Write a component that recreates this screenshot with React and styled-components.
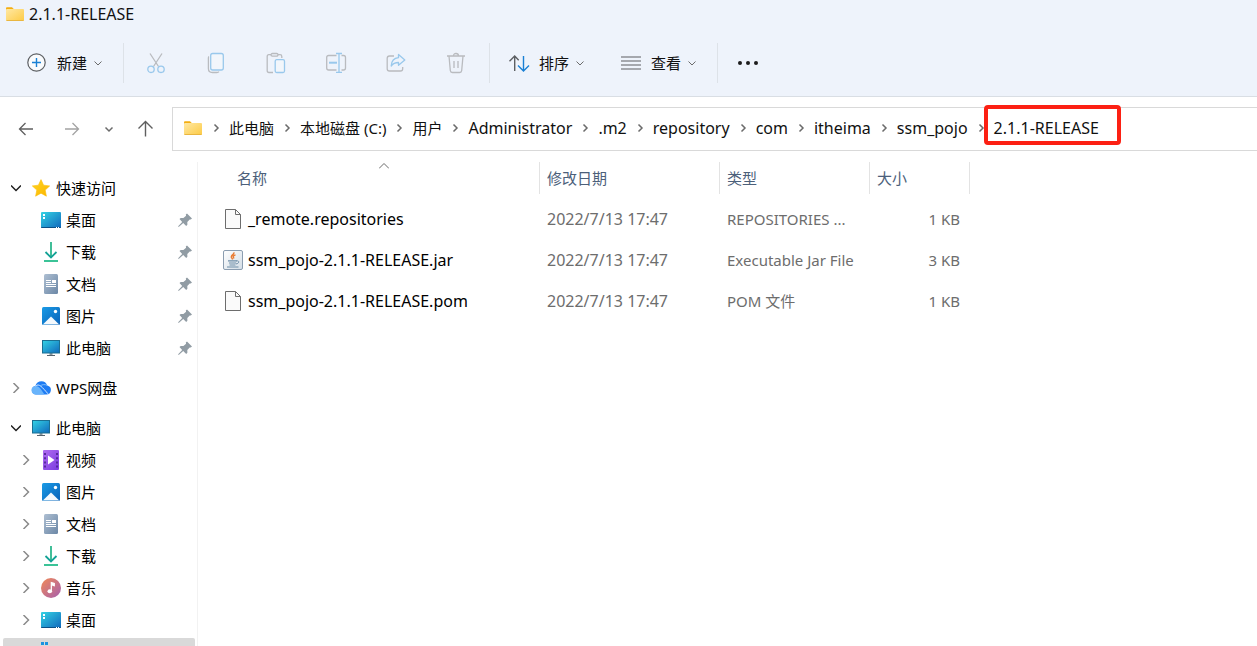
import React from 'react'

import styled, {createGlobalStyle, css} from 'styled-components'

const FONT = '"Noto Sans", "Noto Sans CJK SC", sans-serif'

const places = [
  [
    {icon: 'star', label: '快速访问', open: true, root: true},
    {icon: 'desktop', label: '桌面', pinned: true},
    {icon: 'download', label: '下载', pinned: true},
    {icon: 'document', label: '文档', pinned: true},
    {icon: 'picture', label: '图片', pinned: true},
    {icon: 'computer', label: '此电脑', pinned: true},
  ],
  [{icon: 'cloud', label: 'WPS网盘', root: true}],
  [
    {icon: 'computer', label: '此电脑', open: true, root: true},
    {icon: 'video', label: '视频'},
    {icon: 'picture', label: '图片'},
    {icon: 'document', label: '文档'},
    {icon: 'download', label: '下载'},
    {icon: 'music', label: '音乐'},
    {icon: 'desktop', label: '桌面'},
    {icon: 'drive', selected: true},
  ],
]

const crumbs = [
  {label: '此电脑'},
  {label: '本地磁盘 (C:)'},
  {label: '用户'},
  {label: 'Administrator', latin: true},
  {label: '.m2', latin: true},
  {label: 'repository', latin: true},
  {label: 'com', latin: true},
  {label: 'itheima', latin: true},
  {label: 'ssm_pojo', latin: true},
  {label: '2.1.1-RELEASE', latin: true, marked: true},
]

const files = [
  {
    icon: 'file',
    name: '_remote.repositories',
    date: '2022/7/13 17:47',
    type: 'REPOSITORIES ...',
    size: '1 KB',
  },
  {
    icon: 'jar',
    name: 'ssm_pojo-2.1.1-RELEASE.jar',
    date: '2022/7/13 17:47',
    type: 'Executable Jar File',
    size: '3 KB',
  },
  {
    icon: 'file',
    name: 'ssm_pojo-2.1.1-RELEASE.pom',
    date: '2022/7/13 17:47',
    type: 'POM 文件',
    size: '1 KB',
  },
]

const GlobalStyle = createGlobalStyle`
  * {
    box-sizing: border-box;
  }
  body {
    margin: 0;
    background: #fff;
    color: #111;
    font: 15px/20px ${FONT};
  }
  button {
    padding: 0;
    border: 0;
    background: none;
    color: inherit;
    font: inherit;
  }
  a {
    color: inherit;
    text-decoration: none;
  }
`

const turns = {right: 0, down: 90, up: -90}

const Defs = styled.svg`
  position: absolute;
  width: 0;
  height: 0;
`
const Drawing = styled.svg`
  display: block;
  flex: none;
  width: 20px;
  height: 20px;
  overflow: visible;
`
const Arrow = styled.svg`
  display: block;
  flex: none;
  width: 10px;
  height: 10px;
  transform: rotate(${p => turns[p.$turn]}deg);
`
const Window = styled.div`
  display: flex;
  flex-direction: column;
  height: 100vh;
  overflow: hidden;
`
const TitleBar = styled.header`
  display: flex;
  align-items: center;
  gap: 4px;
  flex: none;
  height: 30px;
  padding: 0 5px 2px;
  background: #eef3fb;
`
const Title = styled.h1`
  margin: 0;
  font-size: 16px;
  font-weight: 400;
`
const CommandBar = styled.div`
  display: flex;
  align-items: center;
  flex: none;
  height: 67px;
  padding-left: 17px;
  border-bottom: 1px solid #d9dee4;
  background: #eef3fb;
`
const MenuButton = styled.button`
  display: flex;
  align-items: center;
  height: 40px;
  padding: 0 10px;
`
const MenuLabel = styled.span`
  margin: 0 6px 0 10px;
`
const Divider = styled.div`
  width: 1px;
  height: 40px;
  margin: 0 9px 0 10px;
  background: #dde2e8;
`
const Actions = styled.div`
  display: flex;
  gap: 20px;
  padding: 0 3px;
`
const Menus = styled.div`
  display: flex;
  gap: 16px;
`
const IconButton = styled.button`
  display: flex;
  align-items: center;
  justify-content: center;
  width: 40px;
  height: 40px;
`
const AddressRow = styled.div`
  display: flex;
  align-items: center;
  flex: none;
  padding: 10px 0 0 3px;
`
const NavButton = styled.button`
  display: flex;
  align-items: center;
  justify-content: center;
  width: ${p => (p.$narrow ? 28 : 46)}px;
  height: 40px;
`
const Path = styled.nav`
  display: flex;
  align-items: center;
  flex: 1;
  height: 44px;
  margin-left: 3px;
  padding: 0 0 2px 10px;
  border: 1px solid #d9d9d9;
  border-right: 0;
  white-space: nowrap;
`
const CrumbGap = styled.span`
  display: flex;
  justify-content: center;
  width: 26px;
`
const Crumb = styled.a`
  position: relative;
  font-size: ${p => (p.$latin ? 16 : 15)}px;
  ${p =>
    p.$marked &&
    css`
      &::after {
        content: '';
        position: absolute;
        inset: -13px -22px -7px -10px;
        border: 4px solid #fc2013;
        border-radius: 4px;
      }
    `}
`
const Body = styled.div`
  display: flex;
  flex: 1;
  min-height: 0;
  padding-top: 11px;
`
const Sidebar = styled.nav`
  display: flex;
  flex-direction: column;
  gap: 12px;
  flex: none;
  width: 198px;
  padding: 12px 2px 0 3px;
  border-right: 1px solid #f2f2f2;
  overflow: hidden;
`
const Group = styled.div`
  display: flex;
  flex-direction: column;
  gap: 4px;
`
const PlaceLink = styled.a`
  display: flex;
  align-items: center;
  gap: 5px;
  height: 28px;
  padding-left: ${p => (p.$root ? 3 : 13)}px;
  border-radius: 2px;
  background: ${p => (p.$selected ? '#d9d9d9' : 'none')};
  color: #000;
`
const Toggle = styled.span`
  display: flex;
  justify-content: center;
  width: 20px;
`
const PlaceLabel = styled.span`
  flex: 1;
`
const Main = styled.main`
  flex: 1;
  min-width: 0;
  padding-left: 17px;
`
const Table = styled.table`
  width: 755px;
  table-layout: fixed;
  border-collapse: collapse;
`
const Col = styled.col`
  width: ${p => p.$width}px;
`
const Th = styled.th`
  padding: 0 0 4px;
  font-weight: 400;
`
const SortButton = styled.button`
  display: block;
  position: relative;
  width: 100%;
  height: 32px;
  padding-left: ${p => (p.$first ? 22 : 7)}px;
  border-right: 1px solid #e3e3e3;
  color: #4c607a;
  text-align: left;
`
const Caret = styled.span`
  position: absolute;
  top: -1px;
  left: 164px;
`
const Td = styled.td`
  height: 41px;
  padding: 0 10px 0 7px;
  color: #6d6d6d;
  font-size: ${p => (p.$large ? 16 : 15)}px;
  text-align: ${p => (p.$end ? 'right' : 'left')};
  white-space: nowrap;
`
const FileName = styled.span`
  display: flex;
  align-items: center;
  gap: 5px;
  padding-left: 1px;
  color: #000;
`

const grey = {stroke: '#b9bbbf', strokeWidth: 1.3}
const blue = {stroke: '#99c8ec', strokeWidth: 1.3}

const drawings = {
  folder: (
    <>
      <path d="M1 4.2q0-1 1-1h5l2 2v4H1z" fill="#f4ae12" />
      <rect x="1" y="5" width="18" height="12" rx="1" fill="url(#folder)" />
      <path d="M1.5 16.5h17" stroke="#e9b640" strokeWidth="1" />
    </>
  ),
  star: (
    <path
      d="M10 1.6l2.6 5.6 6.1.7-4.5 4.2 1.2 6.1-5.4-3-5.4 3 1.2-6.1-4.5-4.2 6.1-.7z"
      fill="url(#star)"
      stroke="#fbbd0a"
      strokeWidth=".6"
      strokeLinejoin="round"
    />
  ),
  desktop: (
    <>
      <rect y="2" width="20" height="16" rx="1" fill="url(#screen)" />
      <path d="M2 4h2v2H2zM2 7h2v2H2z" fill="#fff" />
      <path d="M0 17h20q0 1-1 1H1q-1 0-1-1z" fill="#0a4f86" />
      <path d="M15 17h1v1h-1zM17 17h1v1h-1z" fill="#fff" />
    </>
  ),
  download: (
    <g fill="none" stroke="#1fb090" strokeWidth="1.8">
      <path d="M10 0v15.5" stroke="#2cb78d" />
      <path d="M4.500 10L10 15.500l5.500-5.500" stroke="#14a296" />
      <path d="M3 19h14" stroke="#25bd8c" />
    </g>
  ),
  document: (
    <>
      <rect x="3" width="14" height="20" rx="1.5" fill="url(#slate)" />
      <path d="M5 6.5h5M5 8.500h5M5 10.500h10M5 12.500h10" stroke="#fff" />
      <path d="M11 6h4v3h-4z" fill="#fff" />
    </>
  ),
  picture: (
    <>
      <rect x="1" y="1" width="18" height="18" rx="1.5" fill="url(#photo)" />
      <path d="M1.8 18.500L10 10.400l8.200 8.100z" fill="#f4f9fd" />
      <circle cx="14.5" cy="5.500" r="1.700" fill="#fff" />
    </>
  ),
  computer: (
    <>
      <path d="M8.500 15h3v2h-3z" fill="#8b979f" />
      <path d="M6 17h8v1H6z" fill="#56636c" />
      <rect x="1.500" y="2.500" width="17" height="12.500" fill="url(#screen)" stroke="#1b6f91" />
    </>
  ),
  cloud: (
    <>
      <path
        d="M5 16.500a4.300 4.300 0 0 1-.6-8.500C5 5 7.500 3.200 10.500 3.200c2.700 0 4.900 1.600 5.700 4.200a4.600 4.600 0 0 1-1.200 9.100z"
        fill="#1f7cf3"
      />
      <path d="M1 14.500a4.300 4.300 0 0 1 4-6.600c3.500.1 5.200 3.600 8.500 8.600H5c-2 0-3.300-.8-4-2z" fill="#69b4fb" />
      <path d="M4.600 8C8 5 11 9 17 15.800" stroke="#d3e9ff" fill="none" />
      <path d="M9 8c2-1.500 5-2 7.500-.5" stroke="#82c0ff" fill="none" />
    </>
  ),
  video: (
    <>
      <rect x="2" width="16" height="20" rx="1" fill="url(#violet)" />
      <path d="M4 3v15M16 3v15" stroke="#48208c" strokeWidth="1.600" strokeDasharray="2 2.200" />
      <path d="M7 5.500l6.500 4.500L7 14.500z" fill="#fff" />
    </>
  ),
  music: (
    <>
      <circle cx="10" cy="10" r="10" fill="url(#tune)" />
      <ellipse cx="8.800" cy="13.200" rx="2.300" ry="2" fill="#fff" />
      <path d="M10.300 13.200V4.500l3 1v2.200l-2-.6" fill="#fff" stroke="#fff" strokeWidth="1.200" />
    </>
  ),
  drive: (
    <>
      <path d="M0 0h3v3H0zM4 0h3v3H4zM0 4h3v3H0zM4 4h3v3H4z" fill="#1b93e0" />
      <rect y="9" width="20" height="7" rx="1" fill="#8d969c" />
    </>
  ),
  file: (
    <g fill="#fafafa" stroke="#6d6d6d">
      <path d="M2.500.500h10l5 5v14h-15z" />
      <path d="M12.500.500v5h5" fill="none" />
    </g>
  ),
  jar: (
    <>
      <rect x=".5" y=".5" width="19" height="19" rx="1.500" fill="url(#paper)" stroke="#8b9db0" />
      <path
        d="M10.700 2.300c1.300 2-3.600 3.200-2.200 5.300.5.700.9 1 1.100 1.900M12.500 4.800c-2.300.8-2.800 1.600-1.500 3.700"
        fill="none"
        stroke="#e8792f"
        strokeWidth="1.400"
      />
      <path d="M5 10.900h9M6 13h7M6.500 15h6M4 17h11.500" stroke="#6f8ea8" strokeWidth="1.200" />
      <path d="M13.500 10.900c3.500-.6 2.500 3-.5 3" fill="none" stroke="#6f8ea8" />
    </>
  ),
  pin: (
    <path
      d="M12 3.500l5 5-1.300 1.100-1-.2-2.400 2.700.1 2.700-1.200 1.200-3-3-4.200 3.800-.8.200.2-.9 3.800-4.200-2.700-2.800L5.700 8l2.700.1 2.700-2.400-.3-1.100z"
      fill="#919ca4"
    />
  ),
  add: (
    <>
      <circle cx="9.500" cy="9.500" r="8.700" fill="#f9fbfd" stroke="#5c5f63" strokeWidth="1.200" />
      <path d="M9.500 5v9M5 9.500h9" stroke="#1a80d4" strokeWidth="1.400" />
    </>
  ),
  cut: (
    <g fill="none">
      <path d="M4 .5l8.500 13M16 .5l-8.500 13" {...grey} />
      <circle cx="5" cy="16.300" r="3.200" {...blue} />
      <circle cx="15" cy="16.300" r="3.200" {...blue} />
    </g>
  ),
  copy: (
    <g fill="none">
      <path d="M3 3.500c-.6.300-.6.800-.6 1.500v10.500q0 4 4 4H11c1 0 1.500-.2 2-.8" {...grey} />
      <rect x="4.700" y=".5" width="12.600" height="16.500" rx="2" fill="#f2f6fb" {...blue} />
    </g>
  ),
  paste: (
    <g fill="none">
      <path d="M7 19.500H3q-1.800 0-1.800-1.800V3.500q0-1.800 1.600-1.800H5M12 1.700h2q1.800 0 1.800 1.800V5" {...grey} />
      <rect x="5" y=".5" width="7" height="2.600" rx="1.300" {...grey} />
      <rect x="9.200" y="6.700" width="9.300" height="12.800" rx="1.500" fill="#f2f6fb" {...blue} />
    </g>
  ),
  rename: (
    <g fill="none">
      <path d="M10.500 2.500H2.700q-2 0-2 2v10.500q0 2 2 2h7.800M15.500 2.500h2q2 0 2 2v10.500q0 2-2 2h-2" {...grey} />
      <path d="M3 9.700h8" {...blue} strokeWidth="2" />
      <path d="M13 1v18M10 .5h6M10 19.300h6" {...blue} />
    </g>
  ),
  share: (
    <g fill="none">
      <path d="M8 3H3.500Q1.200 3 1.200 5.200v10.600Q1.200 18 3.500 18h11q2.200 0 2.200-2.200V14" {...grey} />
      <path
        d="M12.500 1.500l6.300 5.500-6.300 5.300V9.500c-3.500 0-5.500 1-7.300 3.500.3-5 3-8 7.300-8.300z"
        strokeLinejoin="round"
        {...blue}
      />
    </g>
  ),
  trash: (
    <g fill="none" {...grey}>
      <path d="M1 3h18M3 3l1.300 14.500q.2 2 2 2h7.400q1.800 0 2-2L17 3M7.500 3q0-2.500 2.500-2.500t2.500 2.500M8 8v7M12 8v7" />
    </g>
  ),
  sort: (
    <g fill="none" strokeWidth="1.400">
      <path d="M5.700 18V3M.5 8.300L5.700 3l4 4.200" stroke="#5c5f63" />
      <path d="M14.500 3v15M9 12.500l5.500 5.500 5.500-5.500" stroke="#1a80d4" />
    </g>
  ),
  view: <path d="M0 4h20M0 8h20M0 12h20M0 16h20" stroke="#5c5f63" strokeWidth="1.200" />,
  more: (
    <g fill="#1c1c1c">
      <circle cx="3" cy="10" r="2" />
      <circle cx="11" cy="10" r="2" />
      <circle cx="19" cy="10" r="2" />
    </g>
  ),
  back: <path d="M17 10H3.500M9.500 4l-6 6 6 6" fill="none" stroke="#5f5f5f" strokeWidth="1.300" />,
  forward: <path d="M3 10h13.500M10.500 4l6 6-6 6" fill="none" stroke="#a3a3a3" strokeWidth="1.300" />,
  up: <path d="M9.500 17.500v-15M2.500 9.500l7-7 7 7" fill="none" stroke="#5f5f5f" strokeWidth="1.400" />,
}

const Icon = ({name}) => (
  <Drawing viewBox="0 0 20 20" aria-hidden="true">
    {drawings[name]}
  </Drawing>
)

const Chevron = ({turn = 'right', color = '#6b6b6b', wide, thin}) => (
  <Arrow viewBox="0 0 10 10" aria-hidden="true" $turn={turn}>
    <path
      d={wide ? 'M2.500 0l5 5-5 5' : 'M3.500 1.500L7 5 3.500 8.500'}
      fill="none"
      stroke={color}
      strokeWidth={thin ? 1 : 1.5}
    />
  </Arrow>
)

const stop = (id, from, to) => (
  <linearGradient key={id} id={id} x1="0" y1="0" x2="1" y2="1">
    <stop offset="0" stopColor={from} />
    <stop offset="1" stopColor={to} />
  </linearGradient>
)

const Gradients = () => (
  <Defs aria-hidden="true">
    <defs>
      {stop('folder', '#ffe8a3', '#fdcb45')}
      {stop('star', '#ffd61f', '#fbb400')}
      {stop('screen', '#34d3e4', '#1068bd')}
      {stop('slate', '#aebfd2', '#6b87a6')}
      {stop('photo', '#1a9be6', '#0a62b8')}
      {stop('violet', '#b06df0', '#7a3be0')}
      {stop('tune', '#f28a56', '#a55fb0')}
      {stop('paper', '#ffffff', '#d3dde6')}
    </defs>
  </Defs>
)

const Menu = ({icon, children}) => (
  <MenuButton>
    <Icon name={icon} />
    <MenuLabel>{children}</MenuLabel>
    <Chevron turn="down" thin />
  </MenuButton>
)

const Toolbar = () => (
  <CommandBar>
    <Menu icon="add">新建</Menu>
    <Divider />
    <Actions>
      <IconButton aria-label="剪切" disabled><Icon name="cut" /></IconButton>
      <IconButton aria-label="复制" disabled><Icon name="copy" /></IconButton>
      <IconButton aria-label="粘贴" disabled><Icon name="paste" /></IconButton>
      <IconButton aria-label="重命名" disabled><Icon name="rename" /></IconButton>
      <IconButton aria-label="共享" disabled><Icon name="share" /></IconButton>
      <IconButton aria-label="删除" disabled><Icon name="trash" /></IconButton>
    </Actions>
    <Divider />
    <Menus>
      <Menu icon="sort">排序</Menu>
      <Menu icon="view">查看</Menu>
    </Menus>
    <Divider />
    <IconButton aria-label="更多"><Icon name="more" /></IconButton>
  </CommandBar>
)

const AddressBar = () => (
  <AddressRow>
    <NavButton aria-label="后退"><Icon name="back" /></NavButton>
    <NavButton aria-label="前进" disabled><Icon name="forward" /></NavButton>
    <NavButton aria-label="最近位置" $narrow><Chevron turn="down" /></NavButton>
    <NavButton aria-label="上移"><Icon name="up" /></NavButton>
    <Path aria-label="路径">
      <Icon name="folder" />
      {crumbs.map(crumb => (
        <React.Fragment key={crumb.label}>
          <CrumbGap><Chevron /></CrumbGap>
          <Crumb href="#" $latin={crumb.latin} $marked={crumb.marked}>
            {crumb.label}
          </Crumb>
        </React.Fragment>
      ))}
    </Path>
  </AddressRow>
)

const Place = ({icon, label, root, open, pinned, selected}) => (
  <PlaceLink href="#" $root={root} $selected={selected}>
    <Toggle>
      {!pinned && (
        <Chevron wide turn={open ? 'down' : 'right'} color={open ? '#1f1f1f' : '#8a8a8a'} />
      )}
    </Toggle>
    <Icon name={icon} />
    <PlaceLabel>{label}</PlaceLabel>
    {pinned && <Icon name="pin" />}
  </PlaceLink>
)

const Files = () => (
  <Table>
    <colgroup>
      <Col $width={325} />
      <Col $width={180} />
      <Col $width={150} />
      <Col $width={100} />
    </colgroup>
    <thead>
      <tr>
        <Th>
          <SortButton $first>
            名称
            <Caret><Chevron wide thin turn="up" /></Caret>
          </SortButton>
        </Th>
        <Th><SortButton>修改日期</SortButton></Th>
        <Th><SortButton>类型</SortButton></Th>
        <Th><SortButton>大小</SortButton></Th>
      </tr>
    </thead>
    <tbody>
      {files.map(file => (
        <tr key={file.name}>
          <Td $large>
            <FileName>
              <Icon name={file.icon} />
              {file.name}
            </FileName>
          </Td>
          <Td $large>{file.date}</Td>
          <Td>{file.type}</Td>
          <Td $end>{file.size}</Td>
        </tr>
      ))}
    </tbody>
  </Table>
)

const App = () => (
  <>
    <GlobalStyle />
    <Gradients />
    <Window>
      <TitleBar>
        <Icon name="folder" />
        <Title>2.1.1-RELEASE</Title>
      </TitleBar>
      <Toolbar />
      <AddressBar />
      <Body>
        <Sidebar>
          {places.map((group, i) => (
            <Group key={i}>
              {group.map(place => <Place key={place.icon} {...place} />)}
            </Group>
          ))}
        </Sidebar>
        <Main><Files /></Main>
      </Body>
    </Window>
  </>
)

export default App
